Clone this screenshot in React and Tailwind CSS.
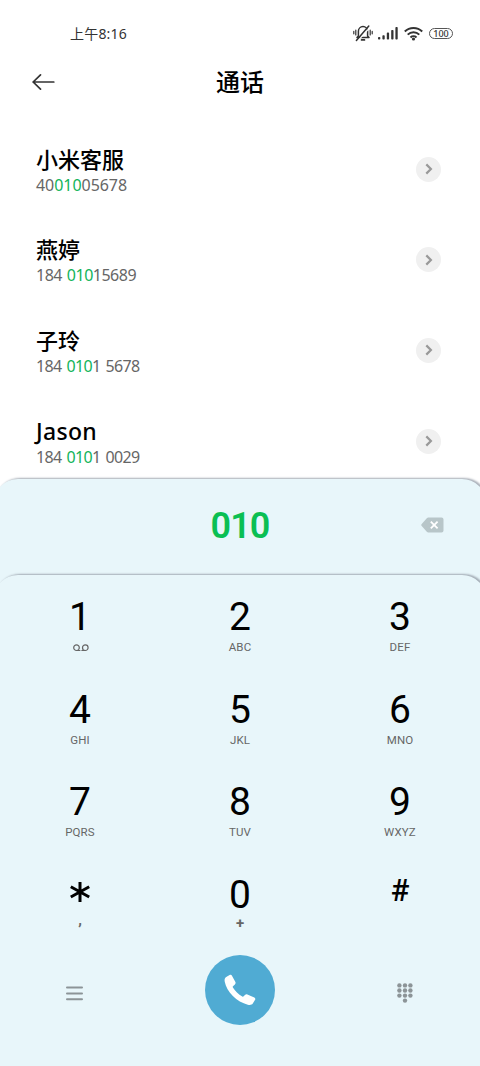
import React from 'react';

const contacts = [
  { name: '小米客服', before: '40', match: '010', after: '05678', tracking: 'tracking-[-0.05px]' },
  { name: '燕婷', before: '184 ', match: '010', after: '15689', tracking: 'tracking-[-0.5px] [word-spacing:1.2px]' },
  { name: '子玲', before: '184 ', match: '010', after: '1 5678', tracking: 'tracking-[-0.6px] [word-spacing:1.2px]' },
  { name: 'Jason', before: '184 ', match: '010', after: '1 0029', tracking: 'tracking-[-0.6px] [word-spacing:1.2px]' },
];

const keys = [
  { digit: '1', voicemail: true },
  { digit: '2', letters: 'ABC' },
  { digit: '3', letters: 'DEF' },
  { digit: '4', letters: 'GHI' },
  { digit: '5', letters: 'JKL' },
  { digit: '6', letters: 'MNO' },
  { digit: '7', letters: 'PQRS' },
  { digit: '8', letters: 'TUV' },
  { digit: '9', letters: 'WXYZ' },
  { digit: '*', letters: ',' },
  { digit: '0', letters: '+' },
  { digit: '#', letters: '' },
];

const StatusBar = () => (
  <div className="flex h-[66px] items-center justify-between pl-[70px] pr-[27px] text-[#333]">
    <span className="text-[14px] tracking-[0.2px]">上午8:16</span>
    <div className="flex items-center">
      {/* Silent mode */}
      <svg className="mr-[5px]" width="20" height="18" viewBox="0 0 20 18" fill="none" stroke="currentColor" strokeWidth="1.5" strokeLinecap="round" strokeLinejoin="round">
        <path d="M4 13.6h12L14.6 12V7.2a4.6 4.6 0 0 0-9.2 0V12L4 13.6Z" />
        <path d="M8.6 15.9h2.8" strokeWidth="1.8" />
        <path d="M2.8 6.2v4.8M.8 7.4v2.4M17.2 6.2v4.8M19.2 7.4v2.4" strokeWidth="1.2" />
        <path d="M5 16.6 17 3.4" stroke="#fff" strokeWidth="1.3" />
        <path d="M3.4 16.4 15.8 2" strokeWidth="1.5" />
      </svg>
      {/* Signal */}
      <svg className="mr-[6px]" width="20" height="14" viewBox="0 0 20 14" fill="currentColor">
        <rect x="0" y="11" width="2.3" height="2.5" rx="0.8" />
        <rect x="4.4" y="9.3" width="2.3" height="4.2" rx="0.8" />
        <rect x="8.8" y="6.6" width="2.3" height="6.9" rx="0.8" />
        <rect x="13.2" y="4" width="2.3" height="9.5" rx="0.8" />
        <rect x="17.4" y="1" width="2.3" height="12.5" rx="0.8" />
      </svg>
      {/* Wi-Fi */}
      <svg className="mr-[6px]" width="19" height="15" viewBox="0 0 19 15" fill="none" stroke="currentColor" strokeWidth="2">
        <path d="M.8 5.5a12.4 12.4 0 0 1 17.4 0M3.7 8.6a8.4 8.4 0 0 1 11.6 0M6.5 11.4a4.4 4.4 0 0 1 6 0" />
        <circle cx="9.5" cy="13" r="1.6" fill="currentColor" stroke="none" />
      </svg>
      <span className="flex h-[11px] w-[24px] items-center justify-center rounded-full border border-[#555] text-[9px] leading-none font-medium">
        100
      </span>
    </div>
  </div>
);

const ContactRow = ({ name, before, match, after, tracking }) => (
  <div className="flex h-[90.6px] shrink-0 items-center justify-between pr-[39px] pl-9">
    <div className="pt-[3px]">
      <div className={`h-[27px] leading-[27px] font-medium text-black ${name === 'Jason' ? 'text-[23px] tracking-[0.3px]' : 'text-[22px]'}`}>
        {name}
      </div>
      <div className={`mt-px h-[22px] text-[16px] leading-[22px] whitespace-pre text-[#666] ${tracking}`}>
        {before}
        <span className="text-[#12b45a]">{match}</span>
        {after}
      </div>
    </div>
    <div className="flex h-[25px] w-[25px] items-center justify-center rounded-full bg-[#f0f0f0]">
      <svg width="8" height="12" viewBox="0 0 8 12" fill="none" stroke="#999" strokeWidth="2.2">
        <path d="m1.3 1.4 4.6 4.6-4.6 4.6" />
      </svg>
    </div>
  </div>
);

const Key = ({ digit, letters, voicemail }) => (
  <div className="flex flex-col items-center font-[Roboto,sans-serif]">
    <div className="flex h-[46px] items-center justify-center text-[39px] leading-[46px] text-black">
      {digit === '*' && (
        <svg className="mt-[-5px]" width="20" height="22" viewBox="0 0 20 22" stroke="#000" strokeWidth="3">
          <path d="M10 1v20M.8 5.8 19.2 16M19.2 5.8.8 16" />
        </svg>
      )}
      {digit === '#' && <span className="mt-[-7px] text-[31px] font-medium">#</span>}
      {digit !== '*' && digit !== '#' && digit}
    </div>
    {voicemail ? (
      <svg className="mt-[4px] ml-[2px]" width="16" height="8" viewBox="0 0 16 8" fill="none" stroke="#666" strokeWidth="1.2">
        <circle cx="3.5" cy="3.7" r="2.8" />
        <circle cx="12.3" cy="3.7" r="2.8" />
        <path d="M3.5 6.5h3.9M8.4 6.5h3.9" />
      </svg>
    ) : (
      <div
        className={`h-[14px] leading-[14px] text-[#666] ${digit === '0' ? 'mt-[-2px] text-[15px] font-bold' : ''} ${
          digit === '*' ? 'mt-[-5px] text-[15px] font-bold' : ''
        } ${digit !== '0' && digit !== '*' ? 'text-[11.5px] font-[450] tracking-[0.15px]' : ''}`}
      >
        {letters}
      </div>
    )}
  </div>
);

export default function App() {
  return (
    <div className="flex h-[1066px] w-[480px] flex-col overflow-hidden bg-white font-['Noto_Sans','Noto_Sans_CJK_SC',sans-serif]">
      <StatusBar />
      <header className="grid h-8 grid-cols-3 items-center px-8">
        <svg className="mt-[-1px]" width="23" height="18" viewBox="0 0 23 18" fill="none" stroke="#333" strokeWidth="1.7" strokeLinecap="round">
          <path d="M1.2 9h20.6M8.5 1.8 1.2 9l7.3 7.2" />
        </svg>
        <h1 className="text-center text-[24px] leading-8 font-medium text-black">通话</h1>
      </header>
      <main className="flex h-[381px] shrink-0 flex-col overflow-hidden pt-[26px]">
        {contacts.map((contact) => (
          <ContactRow key={contact.name} {...contact} />
        ))}
      </main>

      {/* Typed number, its lower edge runs under the keypad's rounded corners */}
      <section className="mx-[-6px] -mb-6 h-[120px] shrink-0 rounded-t-[24px] bg-[#e8f6fa] pr-[42px] pl-[6px] shadow-[2px_-1px_2px_0px_#a9afb8]">
        <div className="grid h-[91px] grid-cols-[1fr_auto_1fr] items-center pl-[36px]">
          <span />
          <span className="mt-[2px] font-[Roboto,sans-serif] text-[36px] leading-none font-semibold tracking-[-0.9px] text-[#0abf53]">010</span>
          <svg className="justify-self-end" width="23" height="16" viewBox="0 0 23 16">
            <path d="M7.3.5h13.2a2 2 0 0 1 2 2v11a2 2 0 0 1-2 2H7.3a2 2 0 0 1-1.5-.7L.7 9a1.5 1.5 0 0 1 0-2l5.1-5.8A2 2 0 0 1 7.3.5Z" fill="#b8c6c9" />
            <path d="m9.8 4.6 6.8 6.8m0-6.8-6.8 6.8" stroke="#fff" strokeWidth="1.8" />
          </svg>
        </div>
      </section>

      <section className="mx-[-6px] grow rounded-t-[24px] bg-[#e8f6fa] px-[6px] pt-[19px] shadow-[2px_-1px_2px_0px_#a3acb5]">
        <div className="grid auto-rows-[92.5px] grid-cols-3">
          {keys.map((key) => (
            <Key key={key.digit} {...key} />
          ))}
        </div>
        <div className="mt-[-9px] grid h-[70px] grid-cols-[1fr_auto_1fr] items-center">
          <svg className="mt-[6px] ml-[66px]" width="17" height="15" viewBox="0 0 17 15" stroke="#8c9497" strokeWidth="2" strokeLinecap="round">
            <path d="M1 1.5h15M1 7.5h15M1 13.3h15" />
          </svg>
          <button className="flex h-[70px] w-[70px] items-center justify-center rounded-full bg-[#50abd3]">
            <svg width="32" height="32" viewBox="0 0 32 32" fill="#fff">
              <path d="M1.8 3.2 5.6 1.1c1-.5 2-.2 2.5.8l3.3 6.2c.4.9.2 1.7-.5 2.3L9 12.2c-.4.4-.4.8-.1 1.3 2.1 3.5 5.6 6.9 9.4 9 .5.3 1 .2 1.4-.2l1.5-1.5c.6-.6 1.4-.7 2.2-.4l6.9 3.1c1 .5 1.3 1.4.8 2.3l-2.3 3.7c-.9 1.4-2.8 1.7-5 1.2C13 28.3 2.5 17.6.8 8.1.4 6 .5 4.2 1.8 3.2Z" />
            </svg>
          </button>
          <svg className="mt-[6px] mr-[67px] justify-self-end" width="16" height="20" viewBox="0 0 16 20" fill="#8c9497">
            {[2.4, 8, 13.4].map((x) =>
              [2.4, 7.5, 12.6].map((y) => <circle key={`${x}-${y}`} cx={x} cy={y} r="2.2" />)
            )}
            <circle cx="8" cy="17.6" r="2.2" />
          </svg>
        </div>
      </section>
    </div>
  );
}
